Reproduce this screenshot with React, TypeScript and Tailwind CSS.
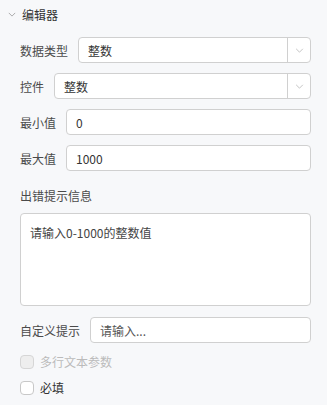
const font = { fontFamily: '"Noto Sans CJK SC", "Noto Sans", sans-serif' };

function Chevron({ className = "" }: { className?: string }) {
  return (
    <svg viewBox="0 0 10 6" className={className} fill="none" stroke="currentColor" strokeWidth="1">
      <path d="M1 1l4 4 4-4" />
    </svg>
  );
}

function Select({ value }: { value: string }) {
  return (
    <div className="flex h-[26px] flex-1 items-center rounded-sm border border-[#d0d0d0] bg-white">
      <span className="flex-1 pl-[9px] text-[#333]">{value}</span>
      <div className="flex h-full w-[23px] items-center justify-center border-l border-[#d0d0d0]">
        <Chevron className="h-[5px] w-[9px] text-[#b8b8b8]" />
      </div>
    </div>
  );
}

function Input({ value, placeholder }: { value?: string; placeholder?: string }) {
  return (
    <div className="flex h-[26px] flex-1 items-center rounded-sm border border-[#d0d0d0] bg-white pl-[9px]">
      {value ? (
        <span className="text-[#333]">{value}</span>
      ) : (
        <span className="text-[#555]">{placeholder}</span>
      )}
    </div>
  );
}

function Row({ label, children }: { label: string; children: React.ReactNode }) {
  return (
    <div className="flex items-center gap-2.5">
      <span className="text-[#4a4a4a]">{label}</span>
      {children}
    </div>
  );
}

function Checkbox({ label, disabled }: { label: string; disabled?: boolean }) {
  return (
    <div className="flex items-center gap-[6px]">
      <span
        className={`h-[14px] w-[14px] rounded-sm border ${
          disabled ? "border-[#d6d6d6] bg-[#eeeeee]" : "border-[#c8c8c8] bg-white"
        }`}
      />
      <span className={disabled ? "text-[#bbbbbb]" : "text-[#333]"}>{label}</span>
    </div>
  );
}

export default function App() {
  return (
    <div className="h-[405px] w-[327px] bg-[#f7f8fa] text-[12px] leading-[17px]" style={font}>
      <div className="flex h-[28px] items-center gap-[6px] pl-[8px]">
        <Chevron className="h-[5px] w-[8px] text-[#999]" />
        <span className="text-[#333]">编辑器</span>
      </div>
      <div className="flex flex-col pl-5 pr-4 pt-[9px]">
        <div className="flex flex-col gap-[10px]">
          <Row label="数据类型">
            <Select value="整数" />
          </Row>
          <Row label="控件">
            <Select value="整数" />
          </Row>
          <Row label="最小值">
            <Input value="0" />
          </Row>
          <Row label="最大值">
            <Input value="1000" />
          </Row>
        </div>
        <div className="mt-[16px] text-[#4a4a4a]">出错提示信息</div>
        <div className="mt-[9px] h-[93px] rounded-sm border border-[#d0d0d0] bg-white px-[9px] pt-[10px] text-[#444]">
          请输入0-1000的整数值
        </div>
        <div className="mt-[11px]">
          <Row label="自定义提示">
            <Input placeholder="请输入..." />
          </Row>
        </div>
        <div className="mt-[10px] flex flex-col gap-[9px]">
          <Checkbox label="多行文本参数" disabled />
          <Checkbox label="必填" />
        </div>
      </div>
    </div>
  );
}
